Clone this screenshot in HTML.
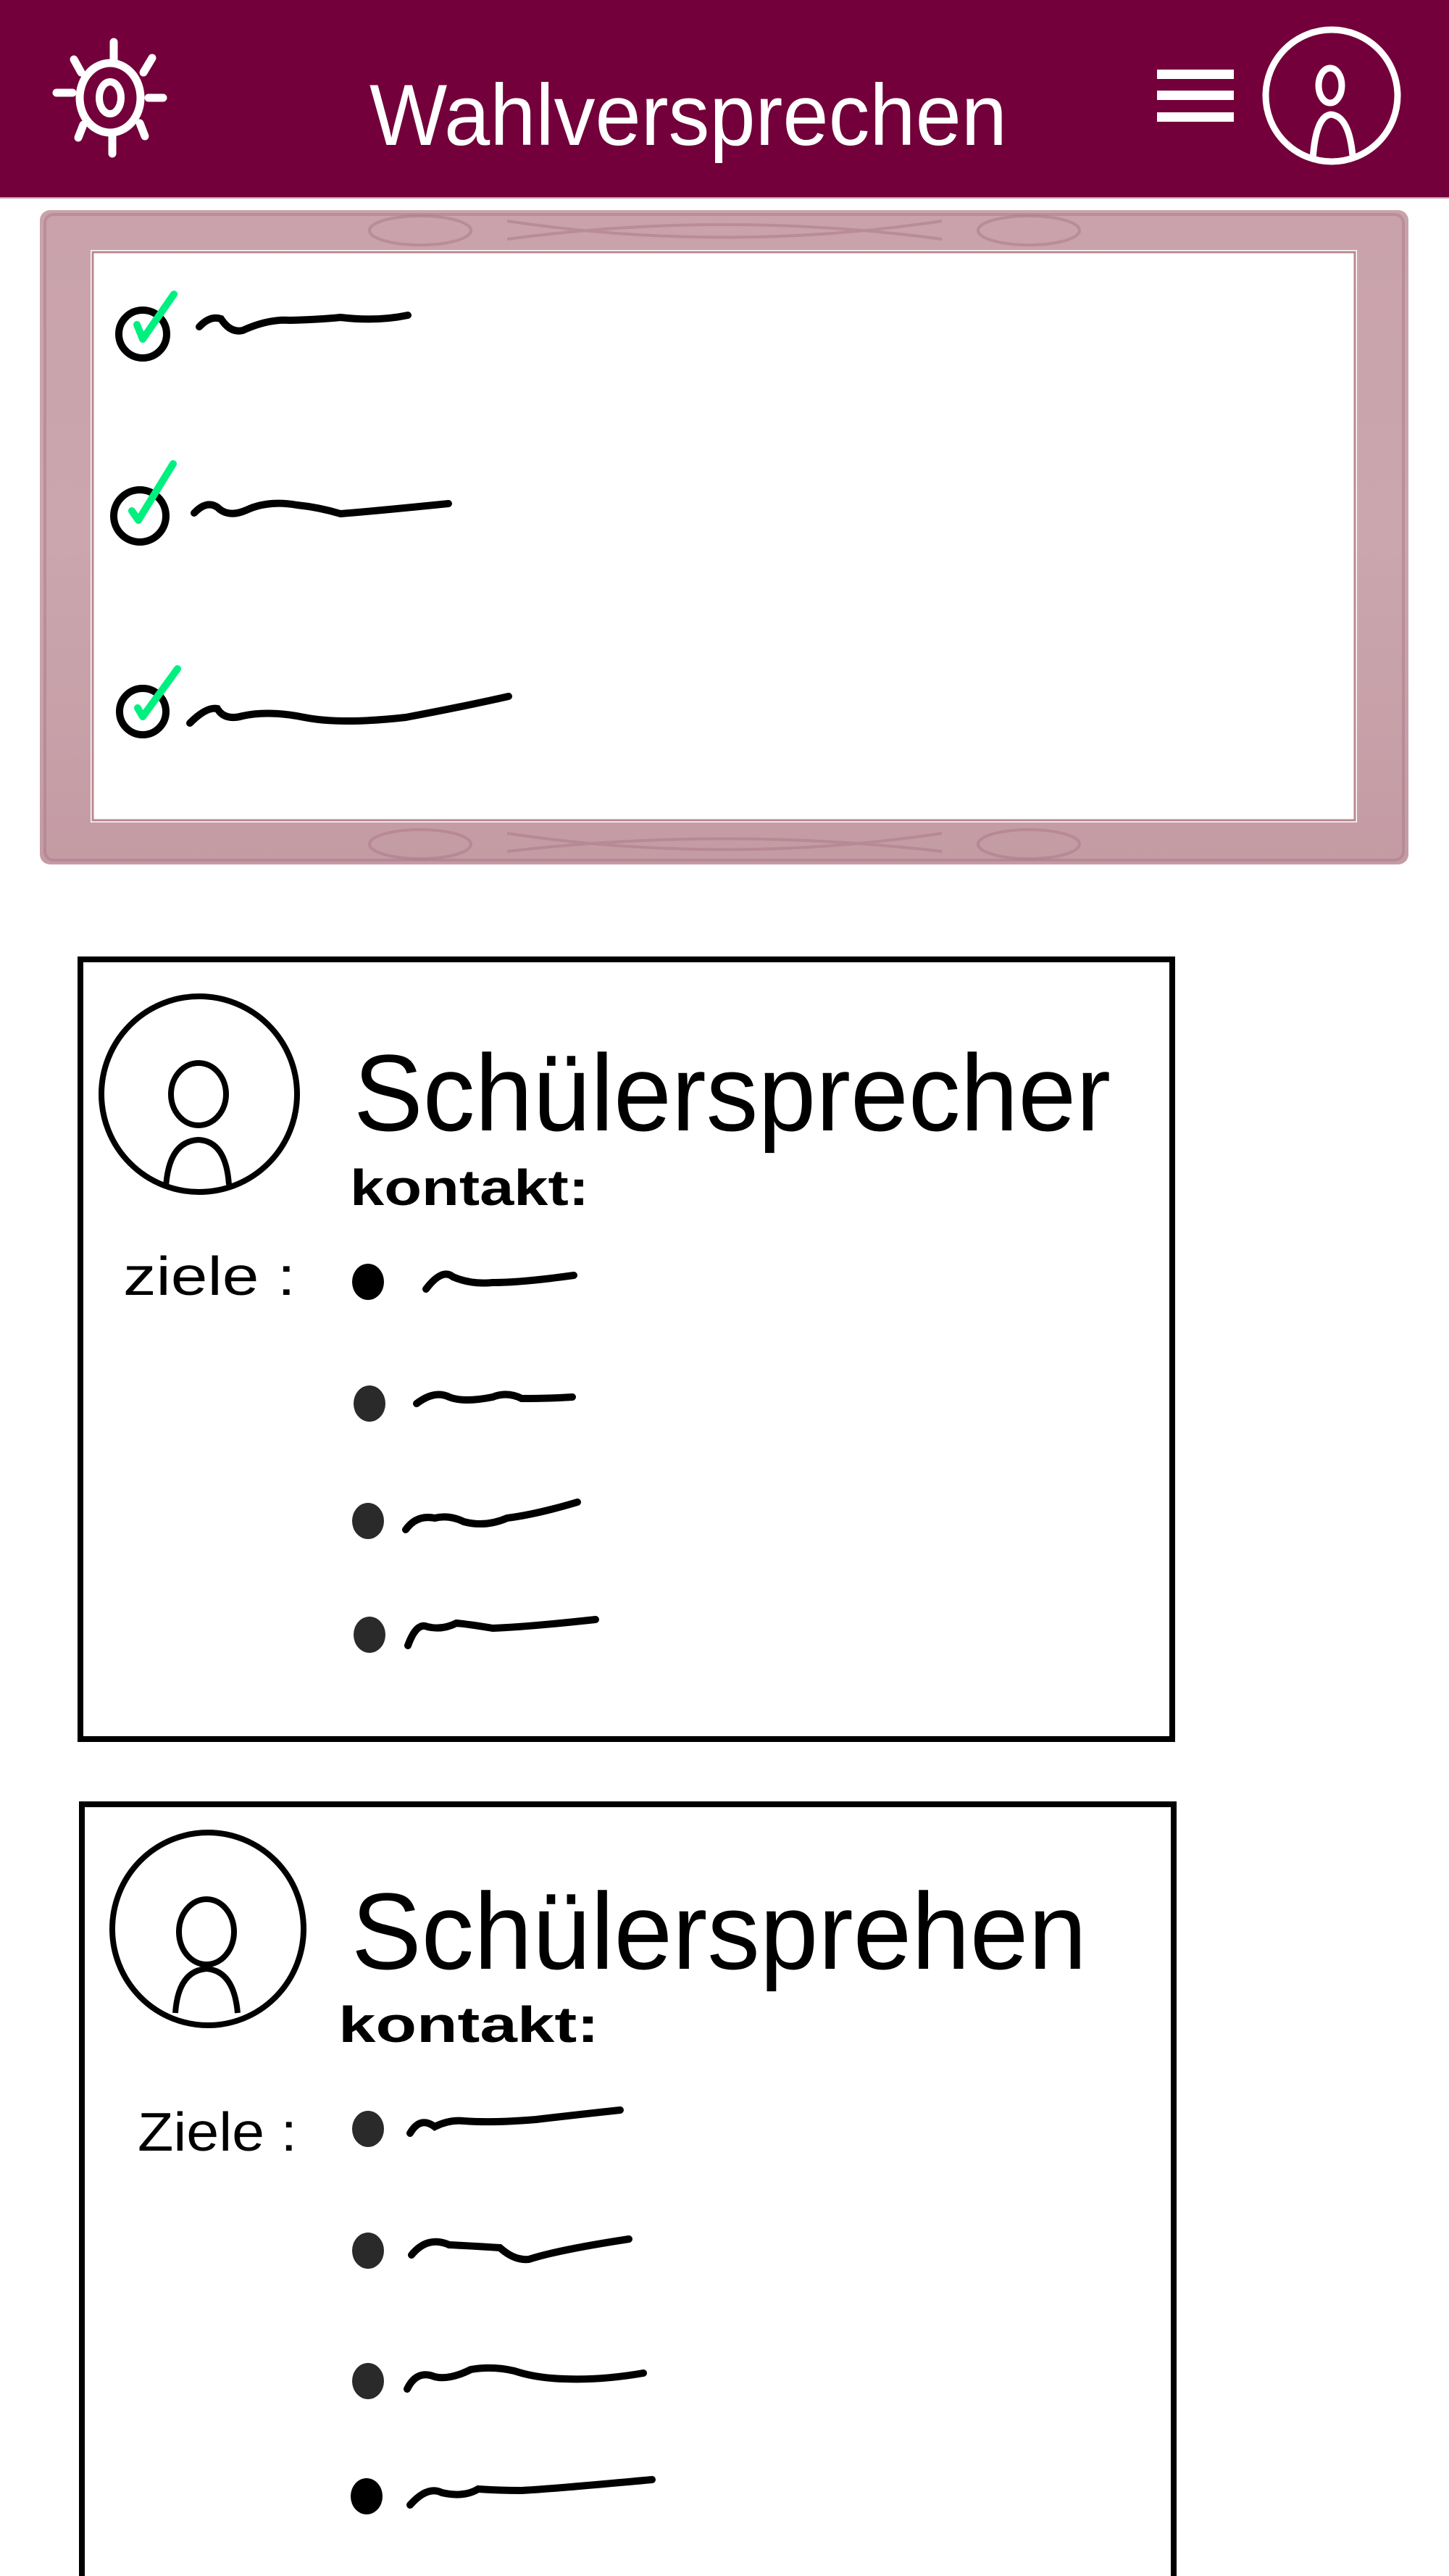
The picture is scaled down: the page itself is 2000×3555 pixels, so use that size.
<!DOCTYPE html>
<html><head><meta charset="utf-8"><style>
html,body{margin:0;padding:0;background:#fff;}
body{width:2000px;height:3555px;overflow:hidden;position:relative;}
svg{position:absolute;left:0;top:0;}
</style></head><body>
<svg width="2000" height="3555" viewBox="0 0 2000 3555" xmlns="http://www.w3.org/2000/svg">
<rect x="0" y="0" width="2000" height="272" fill="#73003a"/>
<rect x="0" y="272" width="2000" height="2" fill="#c89aa8"/>
<g stroke="#fff" fill="none" stroke-width="11" stroke-linecap="round">
<ellipse cx="152" cy="135" rx="42" ry="48"/>
<ellipse cx="152" cy="135" rx="15" ry="22" stroke-width="10"/>
<line x1="157" y1="58" x2="157" y2="82"/>
<line x1="155" y1="188" x2="155" y2="212"/>
<line x1="78" y1="128" x2="100" y2="128"/>
<line x1="205" y1="135" x2="225" y2="135"/>
<line x1="102" y1="82" x2="112" y2="100"/>
<line x1="210" y1="80" x2="198" y2="100"/>
<line x1="108" y1="190" x2="115" y2="172"/>
<line x1="200" y1="188" x2="193" y2="170"/>
</g>
<text x="510" y="200" font-family="Liberation Sans, sans-serif" font-size="120" fill="#fff" textLength="880" lengthAdjust="spacingAndGlyphs">Wahlversprechen</text>
<rect x="1597" y="96" width="106" height="13" fill="#fff"/>
<rect x="1597" y="125" width="106" height="13" fill="#fff"/>
<rect x="1597" y="155" width="106" height="13" fill="#fff"/>
<g stroke="#fff" fill="none" stroke-width="9">
<circle cx="1838" cy="132" r="91"/>
<ellipse cx="1836" cy="118" rx="16" ry="24"/>
<path d="M1812 220 Q1816 160 1837 158 Q1862 160 1867 215"/>
</g>
<defs>
<linearGradient id="fg" x1="0" y1="0" x2="0" y2="1">
<stop offset="0" stop-color="#c9a2ab"/><stop offset="0.5" stop-color="#cba6ae"/><stop offset="1" stop-color="#c49ba4"/>
</linearGradient>
</defs>
<rect x="55" y="290" width="1889" height="903" rx="14" fill="url(#fg)"/>
<rect x="62" y="296" width="1875" height="891" rx="12" fill="none" stroke="#a9788a" stroke-width="4" opacity="0.5"/>
<rect x="125" y="345" width="1748" height="790" fill="#fff"/>
<rect x="128" y="348" width="1742" height="784" fill="none" stroke="#b88894" stroke-width="3"/>
<g fill="none" stroke="#a97886" stroke-width="4" opacity="0.5">
<ellipse cx="580" cy="318" rx="70" ry="20"/><ellipse cx="1420" cy="318" rx="70" ry="20"/>
<ellipse cx="580" cy="1165" rx="70" ry="20"/><ellipse cx="1420" cy="1165" rx="70" ry="20"/>
<path d="M700 330 Q1000 290 1300 330 M700 305 Q1000 350 1300 305"/>
<path d="M700 1175 Q1000 1140 1300 1175 M700 1150 Q1000 1195 1300 1150"/>
</g>
<g stroke="#000" fill="none" stroke-width="10" stroke-linecap="round">
<circle cx="197" cy="461" r="33"/>
<circle cx="193" cy="712" r="36"/>
<circle cx="197" cy="982" r="32"/>
<path d="M275 451 Q290 435 305 440 Q318 460 335 456 Q370 440 400 442 Q440 441 470 438 Q520 444 563 435"/>
<path d="M268 708 Q285 690 300 700 Q315 715 340 704 Q370 690 410 697 Q440 700 470 709 Q520 705 619 695"/>
<path d="M262 998 Q285 975 300 978 Q310 995 335 988 Q370 980 420 990 Q470 1000 560 990 Q640 975 702 961"/>
</g>
<g stroke="#00f080" fill="none" stroke-width="10" stroke-linecap="round" stroke-linejoin="round">
<path d="M189 448 L197 468 L240 406"/>
<path d="M182 705 L191 718 L239 640"/>
<path d="M190 977 L197 989 L245 923"/>
</g>
<rect x="111" y="1324" width="1507" height="1076" fill="none" stroke="#000" stroke-width="8"/>
<g stroke="#000" fill="none" stroke-width="8">
<ellipse cx="275" cy="1510" rx="135" ry="135"/>
<ellipse cx="274" cy="1510" rx="38" ry="43"/>
<path d="M229 1638 Q233 1575 274 1573 Q312 1575 316 1635"/>
</g>
<text x="488" y="1560" font-family="Liberation Sans, sans-serif" font-size="150" textLength="1045" lengthAdjust="spacingAndGlyphs">Schülersprecher</text>
<text x="483" y="1663" font-family="Liberation Sans, sans-serif" font-size="70" font-weight="bold" textLength="330" lengthAdjust="spacingAndGlyphs">kontakt:</text>
<text x="170" y="1787" font-family="Liberation Sans, sans-serif" font-size="75" textLength="238" lengthAdjust="spacingAndGlyphs">ziele :</text>
<g fill="#000"><ellipse cx="508" cy="1769" rx="22" ry="25"/></g>
<g fill="#2a2a2a"><ellipse cx="510" cy="1937" rx="22" ry="25"/><ellipse cx="508" cy="2099" rx="22" ry="25"/><ellipse cx="510" cy="2256" rx="22" ry="25"/></g>
<g stroke="#000" fill="none" stroke-width="10" stroke-linecap="round">
<path d="M588 1779 Q610 1750 625 1762 Q650 1773 680 1770 Q720 1770 792 1760"/>
<path d="M575 1937 Q600 1918 620 1928 Q640 1936 680 1928 Q700 1920 720 1930 Q760 1930 790 1928"/>
<path d="M560 2111 Q575 2090 600 2095 Q620 2090 640 2100 Q670 2108 700 2095 Q740 2090 797 2073"/>
<path d="M563 2271 Q575 2238 590 2245 Q610 2250 630 2240 Q650 2242 680 2247 Q730 2245 822 2235"/>
</g>
<rect x="113" y="2490" width="1507" height="1100" fill="none" stroke="#000" stroke-width="8"/>
<g stroke="#000" fill="none" stroke-width="8">
<ellipse cx="287" cy="2662" rx="132" ry="133"/>
<ellipse cx="285" cy="2666" rx="38" ry="45"/>
<path d="M242 2778 Q246 2720 285 2717 Q323 2720 328 2778"/>
</g>
<text x="485" y="2717" font-family="Liberation Sans, sans-serif" font-size="150" textLength="1015" lengthAdjust="spacingAndGlyphs">Schülersprehen</text>
<text x="467" y="2818" font-family="Liberation Sans, sans-serif" font-size="70" font-weight="bold" textLength="360" lengthAdjust="spacingAndGlyphs">kontakt:</text>
<text x="190" y="2968" font-family="Liberation Sans, sans-serif" font-size="75" textLength="220" lengthAdjust="spacingAndGlyphs">Ziele :</text>
<g fill="#2a2a2a"><ellipse cx="508" cy="2938" rx="22" ry="25"/><ellipse cx="508" cy="3106" rx="22" ry="25"/><ellipse cx="508" cy="3286" rx="22" ry="25"/></g>
<g fill="#000"><ellipse cx="506" cy="3445" rx="22" ry="25"/></g>
<g stroke="#000" fill="none" stroke-width="10" stroke-linecap="round">
<path d="M566 2944 Q580 2920 600 2935 Q620 2925 640 2927 Q680 2930 740 2925 Q800 2918 856 2912"/>
<path d="M568 3112 Q590 3085 620 3098 Q660 3100 690 3102 Q710 3120 730 3118 Q770 3105 868 3090"/>
<path d="M562 3297 Q575 3270 600 3280 Q620 3285 650 3270 Q680 3265 710 3272 Q740 3282 780 3283 Q830 3285 888 3275"/>
<path d="M566 3457 Q590 3430 610 3440 Q640 3447 660 3435 Q690 3437 720 3437 Q760 3435 900 3422"/>
</g>
</svg>
</body></html>
